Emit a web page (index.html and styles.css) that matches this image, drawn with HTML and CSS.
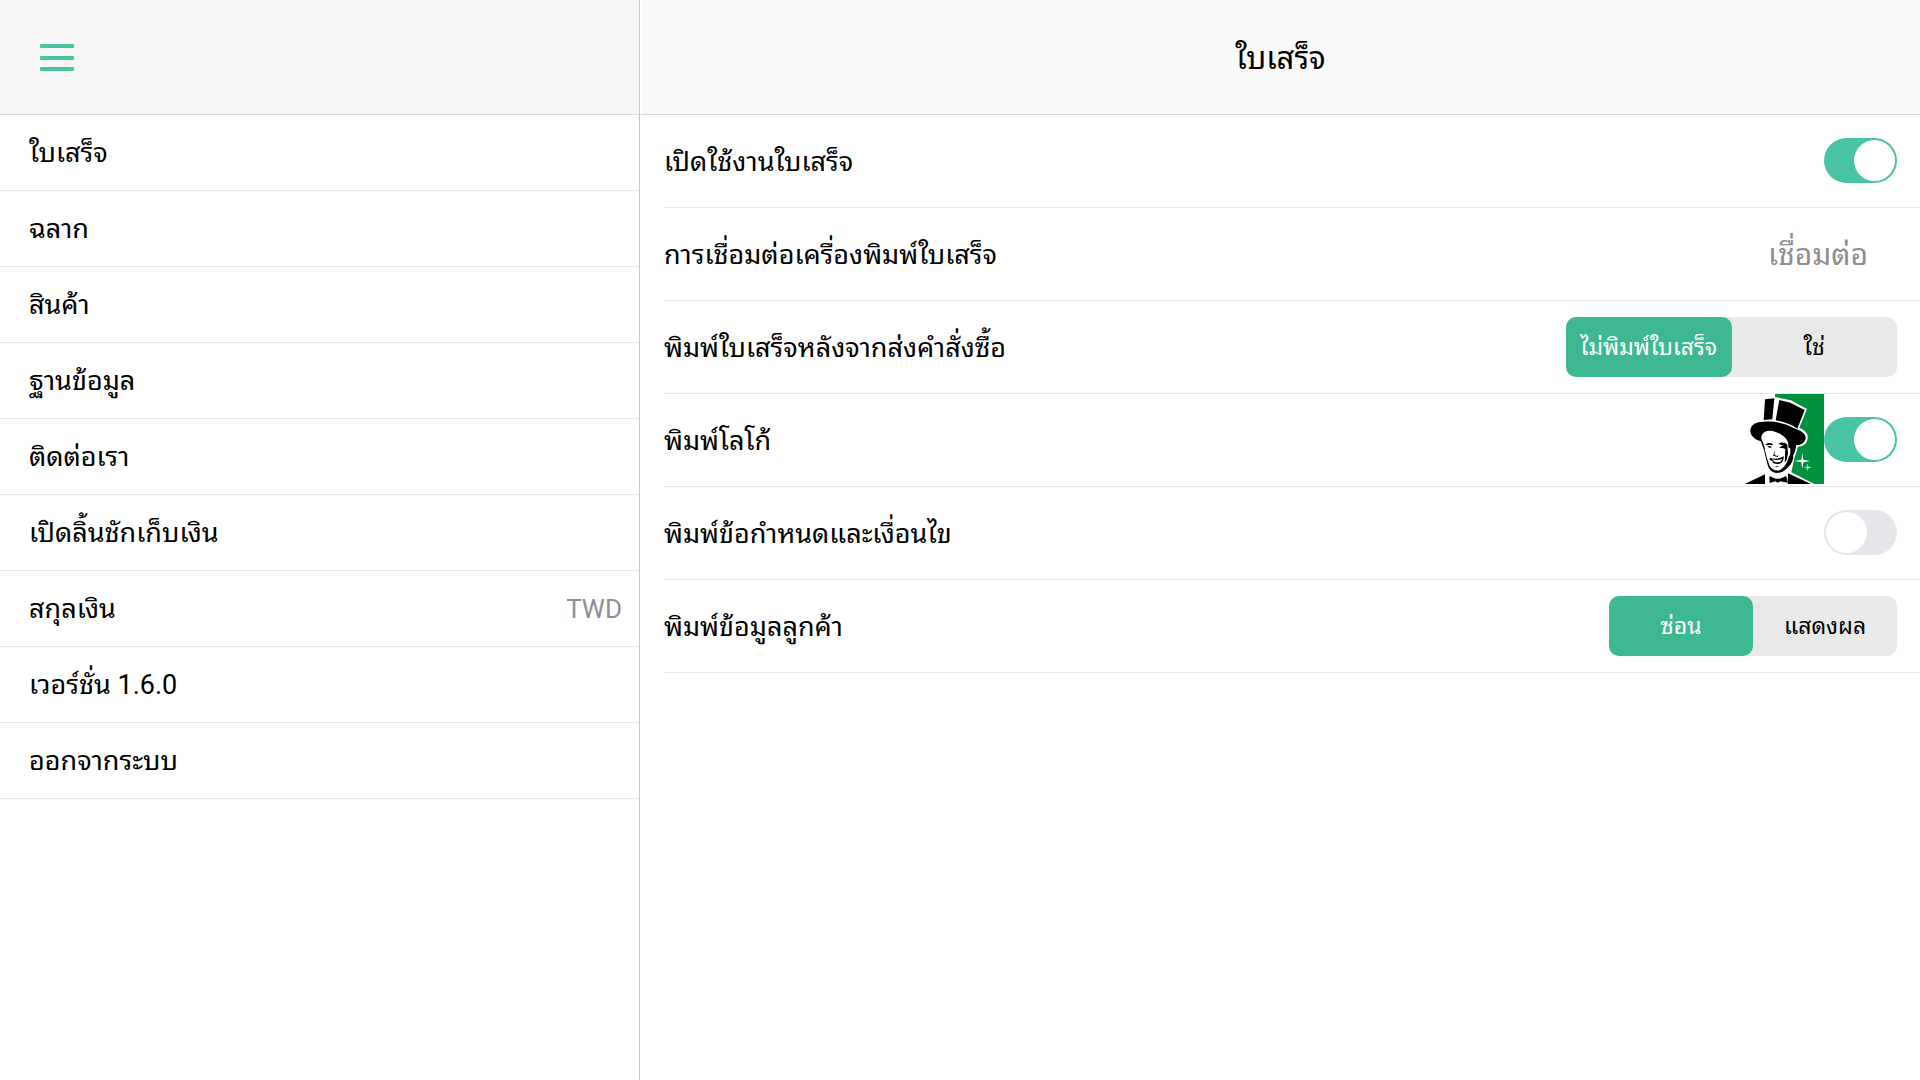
FILE: index.html
```html
<!DOCTYPE html>
<html lang="th">
<head>
  <meta charset="UTF-8">
  <meta name="viewport" content="width=device-width, initial-scale=1.0">
  <title>ใบเสร็จ</title>
  <link rel="stylesheet" href="styles.css">
</head>
<body>
  <aside class="sidebar">
    <header class="sidebar-header">
      <button type="button" class="menu-btn" aria-label="เมนู">
        <svg viewBox="0 0 34 27" width="34" height="27">
          <rect width="34" height="4" rx="1" />
          <rect y="12" width="34" height="4" rx="1" />
          <rect y="23" width="34" height="4" rx="1" />
        </svg>
      </button>
    </header>
    <nav class="menu">
      <a href="#">ใบเสร็จ</a>
      <a href="#">ฉลาก</a>
      <a href="#">สินค้า</a>
      <a href="#">ฐานข้อมูล</a>
      <a href="#">ติดต่อเรา</a>
      <a href="#">เปิดลิ้นชักเก็บเงิน</a>
      <a href="#">สกุลเงิน <span class="menu-value">TWD</span></a>
      <a href="#">เวอร์ชั่น 1.6.0</a>
      <a href="#">ออกจากระบบ</a>
    </nav>
  </aside>

  <main class="content">
    <header class="content-header">
      <h1>ใบเสร็จ</h1>
    </header>
    <form class="settings">
      <div class="row">
        <label for="enable">เปิดใช้งานใบเสร็จ</label>
        <input type="checkbox" class="switch" id="enable" checked>
      </div>
      <div class="row">
        <label for="connect">การเชื่อมต่อเครื่องพิมพ์ใบเสร็จ</label>
        <button type="button" class="connect-btn" id="connect">เชื่อมต่อ</button>
      </div>
      <div class="row">
        <span id="after-label">พิมพ์ใบเสร็จหลังจากส่งคำสั่งซื้อ</span>
        <div class="segment segment-wide" role="group" aria-labelledby="after-label">
          <button type="button" class="active">ไม่พิมพ์ใบเสร็จ</button>
          <button type="button">ใช่</button>
        </div>
      </div>
      <div class="row">
        <label for="logo">พิมพ์โลโก้</label>
        <svg class="logo" viewBox="27 27 240 270" width="80" height="90" aria-hidden="true">
          <path fill="#009140" d="M120 27H267V297H120Z" />
          <!-- white outline behind the man -->
          <path fill="#fff" d="M120 36L168 46L216 72L193 128C212 136 220 148 218 160C216 176 204 186 188 185C187 200 180 210 178 220L169 262L238 297H27V27H120Z" />
          <!-- hat -->
          <path d="M90 43L118 40L112 103L86 105Z" />
          <path d="M133 45L166 53L209 75L187 131C168 117 146 110 122 106Z" />
          <path d="M86 110C112 107 150 114 174 128C196 136 213 144 212 159C210 174 198 181 184 180C182 190 180 203 175 210C175 228 168 240 155 251C143 262 127 268 114 261C105 256 99 246 97 236L91 212L87 196L78 169C58 163 44 151 46 134C48 118 64 110 86 110Z" />
          <!-- face -->
          <path fill="#fff" d="M80 164C76 150 86 137 104 137C122 138 138 146 152 160C159 168 161 176 160 187L165 190C168 200 165 212 161 216C158 232 149 246 137 254C125 260 110 254 104 243L98 225C94 215 94 207 90 197C90 186 85 174 80 164Z" />
          <path d="M91 179C98 173 107 173 114 178L112 181L104 179L97 181ZM97 185C102 181 108 183 111 187L104 188Z" />
          <path d="M130 177C138 170 151 171 157 179L159 205L155 224L149 233C151 222 149 207 151 192L143 189L133 189L138 184L146 182L139 180Z" />
          <path d="M121 194L118 210L127 213L132 210L128 216L114 212Z" />
          <path d="M103 218C117 223 132 222 147 214L144 227C138 239 122 240 111 232L116 231L105 224Z" />
          <path fill="#fff" d="M111 223C121 226 132 226 142 221L137 230C130 233 121 232 116 228Z" />
          <path d="M118 245L132 243L127 247Z" />
          <!-- suit and bow tie -->
          <path d="M29 297L90 268V297ZM159 265L228 297H158Z" />
          <path d="M103 273L122 281H134L154 273L158 293L136 289L128 293L121 289L104 294Z" />
          <path fill="#fff" d="M202 203L205 224L225 228L205 232L202 253L199 232L179 228L199 224ZM218 236L220 245L230 247L220 249L218 258L216 249L207 247L216 245Z" />
        </svg>
        <input type="checkbox" class="switch" id="logo" checked>
      </div>
      <div class="row">
        <label for="terms">พิมพ์ข้อกำหนดและเงื่อนไข</label>
        <input type="checkbox" class="switch" id="terms">
      </div>
      <div class="row">
        <span id="customer-label">พิมพ์ข้อมูลลูกค้า</span>
        <div class="segment" role="group" aria-labelledby="customer-label">
          <button type="button" class="active">ซ่อน</button>
          <button type="button">แสดงผล</button>
        </div>
      </div>
    </form>
  </main>
</body>
</html>
```
FILE: styles.css
```css
* {
  box-sizing: border-box;
  margin: 0;
  padding: 0;
}

body {
  display: flex;
  min-height: 100vh;
  background-color: #fff;
  color: #000;
  font-family: Roboto, "Noto Sans Thai Looped", "Noto Looped Thai", "Droid Sans Thai", Loma, "Noto Sans Thai", sans-serif;
  font-size: 27px;
  line-height: 40px;
}

button {
  border: none;
  background: none;
  color: inherit;
  font: inherit;
  cursor: pointer;
}

.sidebar {
  flex: none;
  width: calc(100% / 3);
  border-right: 1px solid #c8c7cc;
}

.sidebar-header,
.content-header {
  display: flex;
  align-items: center;
  height: 115px;
  border-bottom: 1px solid #d3dbe2;
}

.sidebar-header {
  padding-left: 40px;
  background-color: #f6f6f6;
}

.menu-btn {
  display: flex;
}

.menu-btn svg {
  fill: #48c4a4;
}

.menu a {
  display: flex;
  align-items: center;
  justify-content: space-between;
  height: 76px;
  padding: 0 17px 0 29px;
  border-bottom: 1px solid #e8e8e8;
  color: #000;
  text-decoration: none;
}

.menu .menu-value {
  color: #8e8e93;
  font-size: 26px;
}

.content {
  flex: 1;
  border-left: 1px solid #fff;
}

.content-header {
  justify-content: center;
  padding-top: 3px;
  background-color: #fafafa;
}

.content-header h1 {
  font-size: 31px;
  font-weight: 400;
}

.settings {
  padding-left: 23px;
}

.row {
  display: flex;
  align-items: center;
  height: 93px;
  padding-right: 23px;
  border-bottom: 1px solid #e8e8e8;
}

.row > :first-child {
  margin-right: auto;
  padding-top: 2px;
}

.logo {
  align-self: flex-start;
}

.switch {
  appearance: none;
  width: 73px;
  height: 45px;
  margin-bottom: 2px;
  padding: 2px;
  border-radius: 23px;
  background-color: #e5e5ea;
  cursor: pointer;
}

.switch::before {
  content: "";
  display: block;
  width: 41px;
  height: 41px;
  border-radius: 50%;
  background-color: #fff;
}

.switch:checked {
  background-color: #48c4a4;
}

.switch:checked::before {
  margin-left: auto;
}

.connect-btn {
  padding: 2px 29px 0;
  color: #8e8e93;
  font-size: 30px;
}

.segment {
  display: flex;
  width: 288px;
  border-radius: 10px;
  background-color: #e9e9e9;
}

.segment-wide {
  width: 331px;
}

.segment button {
  flex: 1;
  height: 60px;
  padding-top: 2px;
  border-radius: 10px;
  font-size: 23px;
}

.segment .active {
  background-color: #3eb893;
  color: #fff;
}
```
